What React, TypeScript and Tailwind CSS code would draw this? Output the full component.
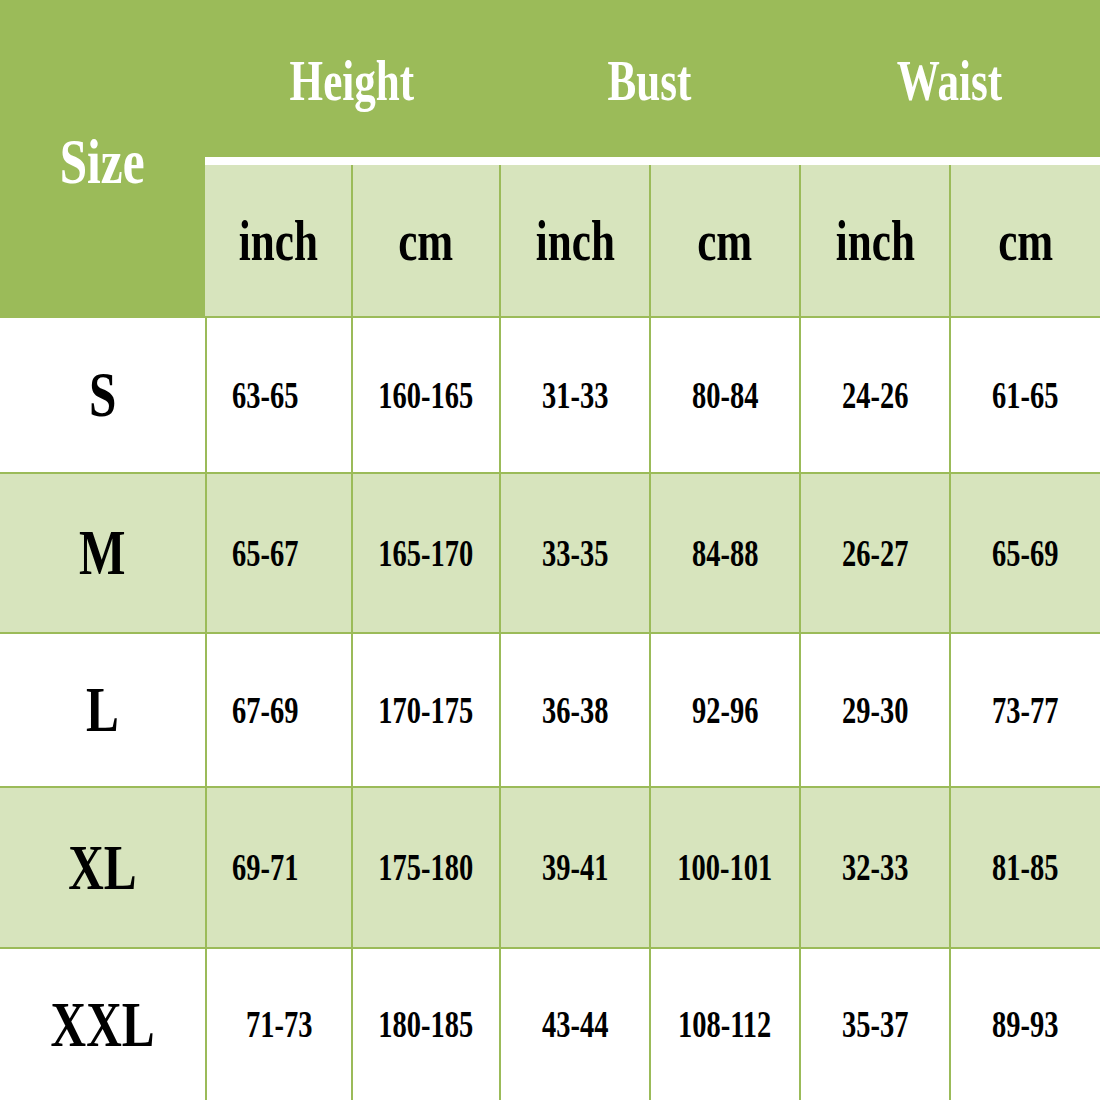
import React from "react";

const cols = "grid-cols-[205px_146px_148px_150px_150px_150px_151px]";

function T({ children, className = "" }: { children: React.ReactNode; className?: string }) {
  return (
    <span className={"inline-block whitespace-nowrap leading-none [transform:scaleX(0.77)] " + className}>
      {children}
    </span>
  );
}

const rows: { size: string; vals: string[]; bg: string; h: string; first?: boolean }[] = [
  { size: "S", vals: ["63-65", "160-165", "31-33", "80-84", "24-26", "61-65"], bg: "bg-white", h: "h-[156px]", first: true },
  { size: "M", vals: ["65-67", "165-170", "33-35", "84-88", "26-27", "65-69"], bg: "bg-[#d7e4bd]", h: "h-[160px]", first: true },
  { size: "L", vals: ["67-69", "170-175", "36-38", "92-96", "29-30", "73-77"], bg: "bg-white", h: "h-[154px]", first: true },
  { size: "XL", vals: ["69-71", "175-180", "39-41", "100-101", "32-33", "81-85"], bg: "bg-[#d7e4bd]", h: "h-[161px]", first: true },
  { size: "XXL", vals: ["71-73", "180-185", "43-44", "108-112", "35-37", "89-93"], bg: "bg-white", h: "h-[153px]" },
];

export default function App() {
  return (
    <div
      className="w-[1100px] h-[1100px] bg-white overflow-hidden font-bold"
      style={{ fontFamily: '"Liberation Serif", "Times New Roman", serif' }}
    >
      {/* Header */}
      <div className="flex h-[316px]">
        <div className="w-[205px] bg-[#9bbb59] flex items-center justify-center pt-[8px]">
          <T className="text-white text-[64px]">Size</T>
        </div>
        <div className="flex-1 flex flex-col">
          <div className="h-[157px] bg-[#9bbb59] grid grid-cols-[294px_300px_301px] items-center">
            <div className="flex justify-center pt-[4px]">
              <T className="text-white text-[56px]">Height</T>
            </div>
            <div className="flex justify-center pt-[4px]">
              <T className="text-white text-[56px]">Bust</T>
            </div>
            <div className="flex justify-center pt-[4px]">
              <T className="text-white text-[56px]">Waist</T>
            </div>
          </div>
          <div className="h-[8px] bg-white" />
          <div className="flex-1 grid grid-cols-[146px_148px_150px_150px_150px_151px] bg-[#d7e4bd]">
            {["inch", "cm", "inch", "cm", "inch", "cm"].map((t, i) => (
              <div
                key={i}
                className={"flex items-center justify-center " + (i > 0 ? "border-l-2 border-[#9bbb59]" : "")}
              >
                <T className="text-black text-[56px]">{t}</T>
              </div>
            ))}
          </div>
        </div>
      </div>

      {/* Body rows */}
      {rows.map((r) => (
        <div key={r.size} className={"grid " + cols + " " + r.h + " " + r.bg + " border-t-2 border-[#9bbb59]"}>
          <div className="flex items-center justify-center">
            <T className="text-black text-[64px]">{r.size}</T>
          </div>
          {r.vals.map((v, i) => (
            <div
              key={i}
              className={
                "flex items-center justify-center border-l-2 border-[#9bbb59] " +
                (i === 0 && r.first ? "pr-[28px]" : "")
              }
            >
              <T className="text-black text-[37px]">{v}</T>
            </div>
          ))}
        </div>
      ))}
    </div>
  );
}
